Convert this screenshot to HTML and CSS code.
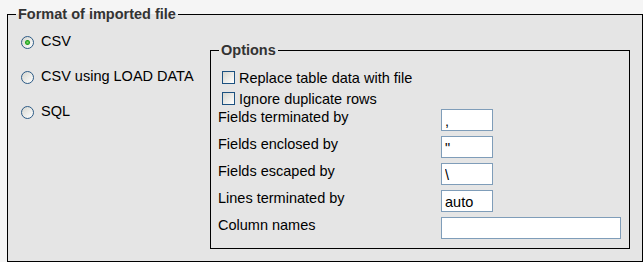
FILE: index.html
```html
<!DOCTYPE html>
<html lang="en">

<head>
    <meta charset="UTF-8">
    <meta name="viewport" content="width=device-width, initial-scale=1.0">
    <title>Import</title>
    <link rel="stylesheet" href="styles.css">
</head>

<body>
    <fieldset class="format">
        <legend>Format of imported file</legend>
        <div class="format-body">
            <div class="choices">
                <label class="choice"><input type="radio" name="format" checked> CSV</label>
                <label class="choice"><input type="radio" name="format"> CSV using LOAD DATA</label>
                <label class="choice"><input type="radio" name="format"> SQL</label>
            </div>
            <fieldset class="options">
                <legend>Options</legend>
                <label class="check"><input type="checkbox"> Replace table data with file</label>
                <label class="check"><input type="checkbox"> Ignore duplicate rows</label>
                <div class="field">
                    <span>Fields terminated by</span>
                    <input type="text" value="," class="short">
                </div>
                <div class="field">
                    <span>Fields enclosed by</span>
                    <input type="text" value="&quot;" class="short">
                </div>
                <div class="field">
                    <span>Fields escaped by</span>
                    <input type="text" value="\" class="short">
                </div>
                <div class="field">
                    <span>Lines terminated by</span>
                    <input type="text" value="auto" class="short">
                </div>
                <div class="field">
                    <span>Column names</span>
                    <input type="text" value="" class="long">
                </div>
            </fieldset>
        </div>
    </fieldset>
</body>
</html>
```

FILE: styles.css
```css
body {
    margin: 0;
    padding-top: 6px;
    background-color: #f5f5f5;
    font-family: 'Liberation Sans', Arial, sans-serif;
    font-size: 14.5px;
    color: #000;
    overflow: hidden;
}

fieldset {
    border: 1px solid #000;
    background-color: #e5e5e5;
    margin: 0;
    box-sizing: border-box;
}

legend {
    font-weight: bold;
    color: #333;
    padding: 0 2px;
    line-height: 16px;
}

.format {
    margin-left: 7px;
    width: 636px;
    height: 256px;
    padding: 0 0 0 13px;
}

.format > legend {
    margin-left: -5px;
}

.format-body {
    display: flex;
}

.choices {
    width: 189px;
    padding-top: 1px;
}

.choice {
    display: flex;
    align-items: center;
    gap: 7px;
    height: 35px;
}

.choice input {
    appearance: none;
    margin: 0;
    width: 13px;
    height: 13px;
    border: 1px solid #2c5a85;
    border-radius: 50%;
    background: linear-gradient(135deg, #d6d6cf, #ffffff);
    position: relative;
    top: 2px;
}

.choice input:checked {
    background: radial-gradient(circle, #7fdc6a 0, #21a121 2px, transparent 3px),
        linear-gradient(135deg, #d6d6cf, #ffffff);
}

.options {
    margin-top: 20px;
    width: 420px;
    height: 207px;
    padding: 9px 0 0 7px;
}

.options > legend {
    margin-left: 1px;
}

.check {
    display: flex;
    align-items: center;
    gap: 4px;
    height: 21px;
    padding-left: 4px;
}

.check input {
    appearance: none;
    margin: 0;
    width: 13px;
    height: 13px;
    border: 1px solid #1c5180;
    background: linear-gradient(135deg, #d6d6cf, #ffffff);
}

.field {
    display: flex;
    align-items: flex-start;
    height: 27px;
}

.field span {
    width: 223px;
}

.field input {
    margin: 0;
    height: 22px;
    box-sizing: border-box;
    border: 1px solid #7f9db9;
    background: #fff;
    padding: 2px 3px 0;
    font-family: 'Liberation Sans', Arial, sans-serif;
    font-size: 14.5px;
    color: #000;
    outline: none;
}

.short {
    width: 52px;
}

.long {
    width: 180px;
}
```
